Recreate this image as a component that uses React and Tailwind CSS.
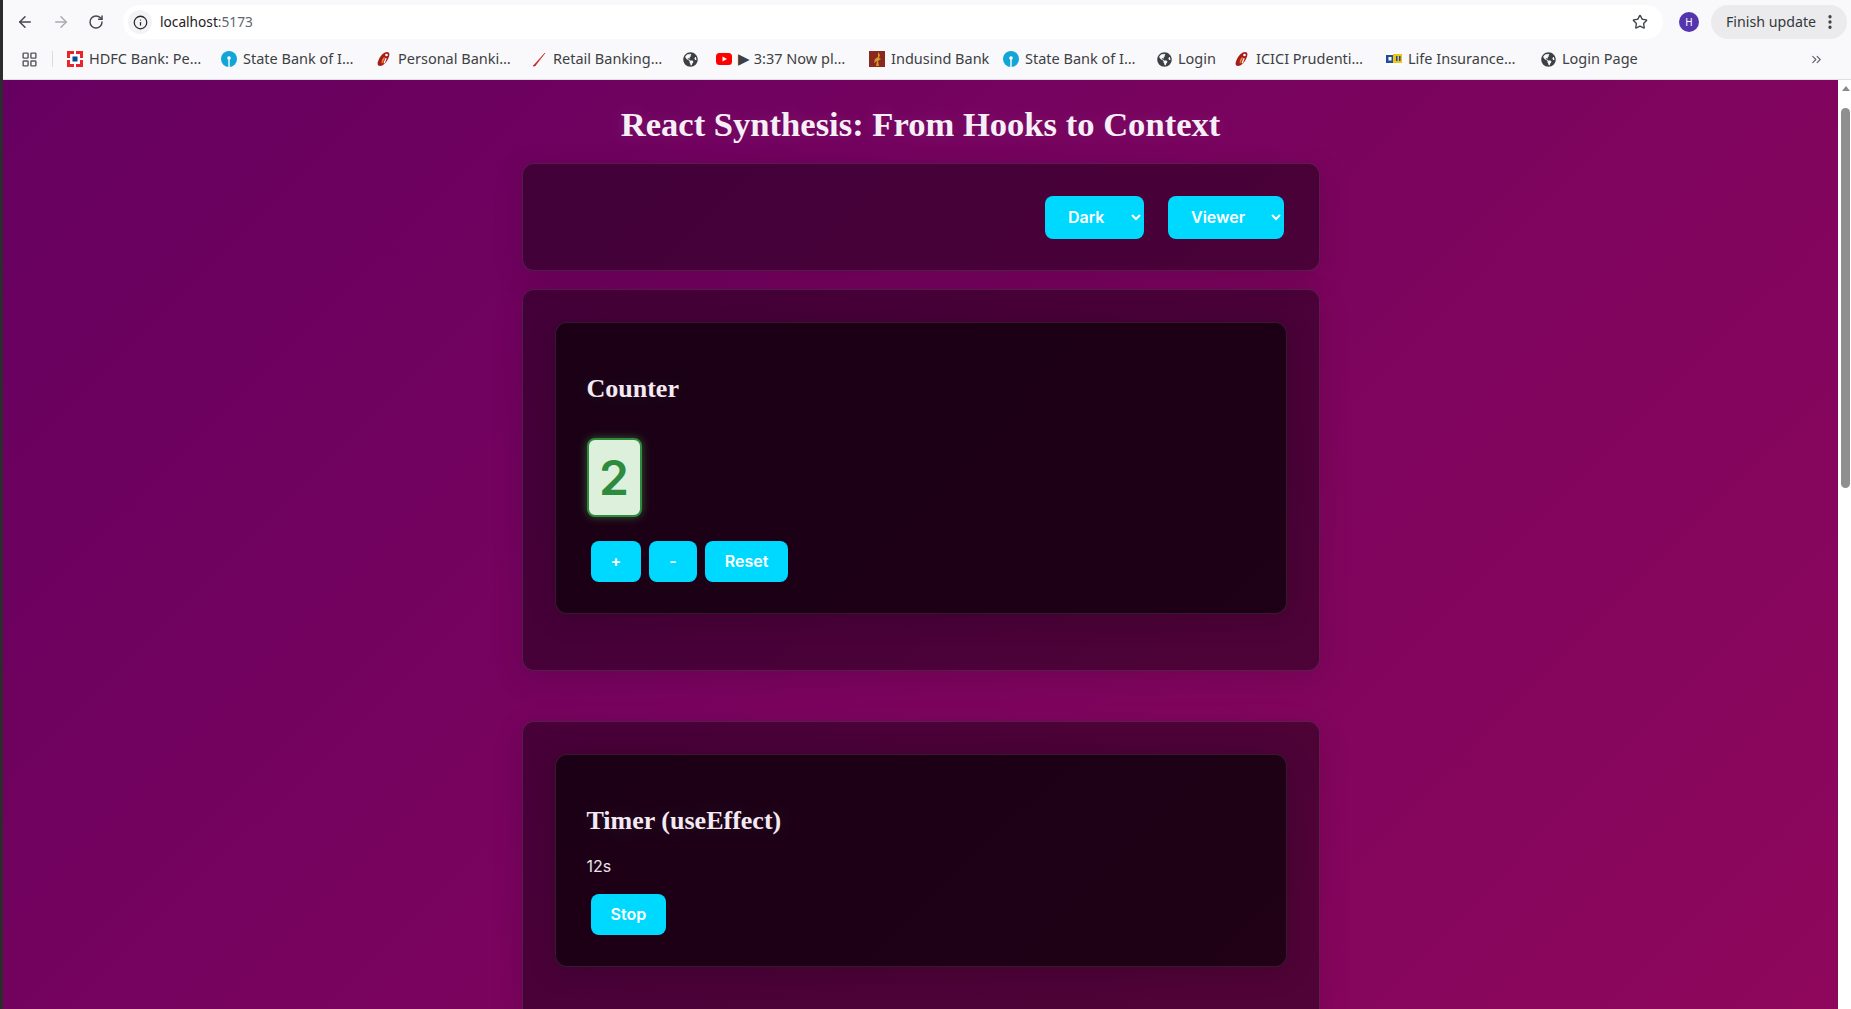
import React from 'react';
import { ArrowLeft, ArrowRight, RotateCw, Info, Star, LayoutGrid, ChevronsRight, EllipsisVertical } from 'lucide-react';
import { FaGlobeAmericas } from 'react-icons/fa';

const HdfcIcon = () => (
  <svg viewBox="0 0 16 16" className="h-4 w-4 shrink-0">
    <rect width="16" height="16" fill="#ed232a" />
    <rect x="3" y="3" width="10" height="10" fill="#fff" />
    <rect x="5.5" y="5.5" width="5" height="5" fill="#004c8f" />
    <rect x="7" y="0" width="2" height="3" fill="#fff" />
    <rect x="7" y="13" width="2" height="3" fill="#fff" />
    <rect x="0" y="7" width="3" height="2" fill="#fff" />
    <rect x="13" y="7" width="3" height="2" fill="#fff" />
  </svg>
);

const SbiIcon = () => (
  <svg viewBox="0 0 16 16" className="h-4 w-4 shrink-0">
    <circle cx="8" cy="8" r="8" fill="#12a5d8" />
    <circle cx="8" cy="7" r="1.8" fill="#fff" />
    <rect x="7.3" y="8" width="1.4" height="8" fill="#fff" />
  </svg>
);

const IciciIcon = () => (
  <svg viewBox="0 0 16 16" className="h-4 w-4 shrink-0">
    <path d="M11 1c3 0 3 3 1 7s-5 7-8 7-3-3-1-7 5-7 8-7z" fill="#a61c1c" />
    <path d="M6 13c-1-2 0-5 2-7l1 1c-1 2-2 4-3 6z" fill="#f08a1d" />
    <circle cx="10.5" cy="4" r="1.3" fill="#fff" />
    <path d="M9.5 7l1.2.4-2 5-1.2-.4z" fill="#fff" />
  </svg>
);

const RetailIcon = () => (
  <svg viewBox="0 0 16 16" className="h-4 w-4 shrink-0">
    <path d="M14 2 3 14l-1 1 2 0z" fill="#c8202a" stroke="#c8202a" strokeWidth="0.6" />
  </svg>
);

const YoutubeIcon = () => (
  <svg viewBox="0 0 16 16" className="h-4 w-4 shrink-0">
    <rect y="2" width="16" height="12" rx="3.5" fill="#f00" />
    <path d="M6.5 5.5 11 8l-4.500 2.500z" fill="#fff" />
  </svg>
);

const IndusindIcon = () => (
  <svg viewBox="0 0 16 16" className="h-4 w-4 shrink-0">
    <rect width="16" height="16" fill="#8a2a1f" />
    <path d="M9 1l2 3-1 3 2 1-3 2 1 5H7l1-5-3 2 1-4 3-2z" fill="#d39a2a" />
  </svg>
);

const LicIcon = () => (
  <svg viewBox="0 0 16 16" className="h-4 w-4 shrink-0">
    <rect y="2" width="16" height="12" fill="#fff" />
    <rect y="4" width="7" height="8" fill="#1d4d9b" />
    <rect x="7" y="3" width="9" height="9" fill="#f2c21a" />
    <rect x="2.500" y="6" width="3" height="3.500" fill="#fff" />
    <rect x="10" y="5" width="1.500" height="5" fill="#1d4d9b" />
    <rect x="13" y="5" width="1.500" height="5" fill="#1d4d9b" />
  </svg>
);

const GlobeIcon = () => <FaGlobeAmericas className="h-[15px] w-[15px] shrink-0 text-[#3d4043]" />;

const bookmarks = [
  { icon: <HdfcIcon />, label: 'HDFC Bank: Pe…', w: 'w-[114px]' },
  { icon: <SbiIcon />, label: 'State Bank of I…', w: 'w-[115px]' },
  { icon: <IciciIcon />, label: 'Personal Banki…', w: 'w-[115px]' },
  { icon: <RetailIcon />, label: 'Retail Banking…', w: 'w-[112px]' },
  { icon: <GlobeIcon />, label: '', w: 'w-0' },
  { icon: <YoutubeIcon />, label: '▶ 3:37 Now pl…', w: 'w-[113px]' },
  { icon: <IndusindIcon />, label: 'Indusind Bank', w: 'w-[94px]' },
  { icon: <SbiIcon />, label: 'State Bank of I…', w: 'w-[114px]' },
  { icon: <GlobeIcon />, label: 'Login', w: 'w-[38px]' },
  { icon: <IciciIcon />, label: 'ICICI Prudenti…', w: 'w-[112px]' },
  { icon: <LicIcon />, label: 'Life Insurance…', w: 'w-[115px]' },
  { icon: <GlobeIcon />, label: 'Login Page', w: 'w-[73px]' },
];

function BrowserChrome() {
  return (
    <div className="h-20 shrink-0 border-b border-[#dedfe1] bg-[#f9f9fb] font-['Noto_Sans',sans-serif] text-[#3d4043]">
      <div className="flex h-[44px] items-center">
        <div className="flex items-center gap-[18px] pl-[13px]">
          <ArrowLeft className="h-[18px] w-[18px] text-[#45484c]" strokeWidth={2} />
          <ArrowRight className="h-[18px] w-[18px] text-[#a9abae]" strokeWidth={2} />
          <RotateCw className="h-[16px] w-[16px] text-[#45484c]" strokeWidth={2.2} />
        </div>
        <div className="ml-[19px] flex h-[34px] w-[1540px] items-center rounded-full bg-white pl-[5px] pr-[15px]">
          <div className="flex h-6 w-6 items-center justify-center rounded-full bg-[#f3f3f5]">
            <Info className="h-[15px] w-[15px] text-[#26282b]" strokeWidth={2} />
          </div>
          <span className="ml-[8px] text-[13.700px] text-[#1f2023]">
            localhost<span className="text-[#62656a]">:5173</span>
          </span>
          <Star className="ml-auto h-[16px] w-[16px] text-[#3d4043]" strokeWidth={2} />
        </div>
        <div className="ml-[16px] flex h-5 w-5 items-center justify-center rounded-full bg-[#5535ad] text-[10px] text-white">H</div>
        <div className="ml-[12px] flex h-[34px] w-[136px] items-center justify-between rounded-full bg-[#ebebed] pl-[15px] pr-[8px] text-[14.200px] text-[#35373a]">
          Finish update
          <EllipsisVertical className="h-[18px] w-[18px] text-[#3d4043]" strokeWidth={2.4} />
        </div>
      </div>
      <div className="flex h-[30px] items-center pl-[18px] text-[14.500px] whitespace-nowrap">
        <LayoutGrid className="h-[17px] w-[17px] text-[#55585c]" strokeWidth={2} />
        <div className="mx-[14px] h-[16px] w-px bg-[#dadbdd]" />
        <div className="flex items-center gap-[18px]">
          {bookmarks.map((b, i) => (
            <div key={i} className="flex items-center gap-[6px]">
              {b.icon}
              {b.label && <span className={`${b.w} text-[#3d4043]`}>{b.label}</span>}
            </div>
          ))}
        </div>
        <ChevronsRight className="ml-auto mr-[27px] h-[15px] w-[15px] text-[#5f6368]" strokeWidth={1.8} />
      </div>
    </div>
  );
}

function ActionButton({ children }) {
  return (
    <button className="mx-1 h-[41px] cursor-pointer rounded-lg bg-[#00d9ff] px-5 pb-px font-semibold text-white">
      {children}
    </button>
  );
}

function Select({ children, className }) {
  return (
    <select className={`h-[43px] cursor-pointer rounded-lg bg-[#00d9ff] pr-0 pb-px pl-[19.500px] font-semibold text-white ${className}`}>
      {children}
    </select>
  );
}

function CardTitle({ children }) {
  return (
    <h2 className="pt-5 font-['Liberation_Serif',serif] text-[26px] leading-[29px] font-bold text-[#f3eaf3] [text-shadow:0_0_20px_rgba(255,255,255,0.12)]">
      {children}
    </h2>
  );
}

function InnerCard({ children }) {
  return (
    <div className="mb-6 rounded-xl bg-black/60 p-8 shadow-[0_4px_30px_rgba(0,0,0,0.15)] ring-1 ring-white/10 ring-inset">
      {children}
    </div>
  );
}

function Panel({ children, className }) {
  return (
    <section className={`rounded-xl border border-white/10 bg-black/40 p-8 shadow-[0_8px_32px_rgba(0,0,0,0.12)] ${className}`}>
      {children}
    </section>
  );
}

function Scrollbar() {
  return (
    <div className="flex w-[13px] shrink-0 flex-col items-center bg-white pl-[2px]">
      <div className="mt-[6px] h-0 w-0 border-x-[4px] border-b-[5px] border-x-transparent border-b-[#8a8a8a]" />
      <div className="mt-[17px] h-[380px] w-[9px] rounded-full bg-[#8f8f8f]" />
    </div>
  );
}

export default function App() {
  return (
    <div className="flex h-screen overflow-hidden bg-[#2c2c2c] font-['Inter',sans-serif]">
      <div className="w-[3px] shrink-0" />
      <div className="flex min-w-0 flex-1 flex-col">
        <BrowserChrome />
        <div className="flex min-h-0 flex-1">
          <main className="min-w-0 flex-1 overflow-hidden bg-[linear-gradient(135deg,#660060,#8e075c)]">
            <div className="mx-auto w-[798px]">
              <h1 className="mt-[25px] mb-[19px] text-center font-['Liberation_Serif',serif] text-[34.600px] leading-[39px] font-bold text-[#f7eff7] [text-shadow:0_0_20px_rgba(255,255,255,0.12)]">
                React Synthesis: From Hooks to Context
              </h1>

              <Panel className="mb-[18px]">
                <div className="flex h-[42px] items-start justify-end gap-6 pr-[3px]">
                  <Select className="w-[99px]">
                    <option>Dark</option>
                    <option>Light</option>
                  </Select>
                  <Select className="w-[116px]">
                    <option>Viewer</option>
                    <option>Admin</option>
                  </Select>
                </div>
              </Panel>

              <Panel className="mb-[50px]">
                <InnerCard>
                  <CardTitle>Counter</CardTitle>
                  <div className="mt-[35px] flex h-[79px] w-[55px] items-center justify-center rounded-lg border-2 border-[#2e8b3e] bg-[#dcf0dc] text-5xl font-semibold text-[#2e8b3e] shadow-[0_0_8px_rgba(76,175,80,0.5)]">
                    2
                  </div>
                  <div className="mt-6 flex">
                    <ActionButton>+</ActionButton>
                    <ActionButton>-</ActionButton>
                    <ActionButton>Reset</ActionButton>
                  </div>
                </InnerCard>
              </Panel>

              <Panel>
                <InnerCard>
                  <CardTitle>Timer (useEffect)</CardTitle>
                  <p className="mt-[21px] leading-5 text-[#ece4ec]">12s</p>
                  <div className="mt-[18px] flex">
                    <ActionButton>Stop</ActionButton>
                  </div>
                </InnerCard>
              </Panel>
            </div>
          </main>
          <Scrollbar />
        </div>
      </div>
    </div>
  );
}
